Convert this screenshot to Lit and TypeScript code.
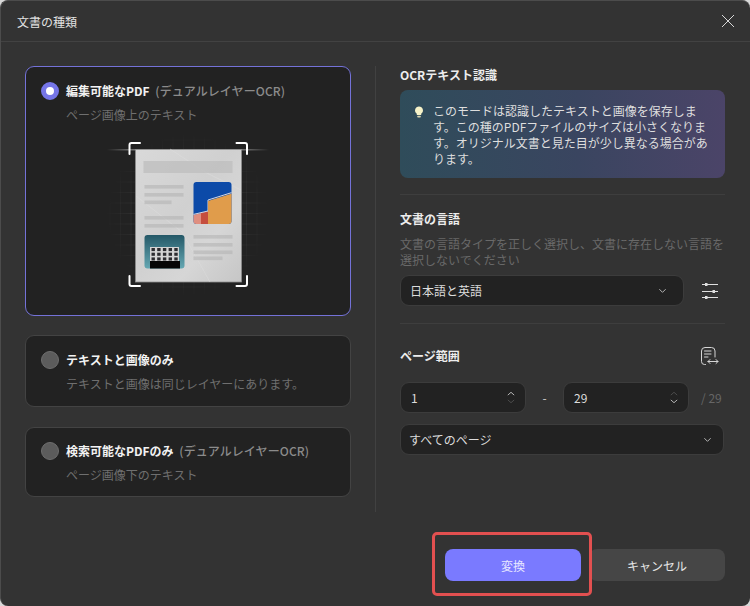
import { LitElement, html, css, svg } from "lit";
import { customElement } from "lit/decorators.js";

const chevron = (cls = "chev") => html`<svg class=${cls} viewBox="0 0 10 6" fill="none" stroke="currentColor" stroke-width="1.1"><path d="M1.5 1 5 4.5 8.5 1"/></svg>`;

const gridLines = () => {
  const out = [];
  for (let x = 110; x <= 265; x += 10.5) out.push(svg`<line x1=${x} x2=${x} y1="135" y2="295"/>`);
  for (let y = 140; y <= 295; y += 10.5) out.push(svg`<line y1=${y} y2=${y} x1="105" x2="270"/>`);
  return out;
};

const textBars = (rows: [number, number, number][]) =>
  rows.map(([x, y, w]) => svg`<rect x=${x} y=${y} width=${w} height="3.6" fill="#b4b4b4" opacity=".6"/>`);

@customElement("page-art")
class PageArt extends LitElement {
  static styles = css`
    :host { display: block; }
    svg { display: block; width: 170px; height: 160px; }
    .soft { filter: blur(.35px); }
  `;
  render() {
    return html`<svg viewBox="100 135 170 160">
      <defs>
        <radialGradient id="gridFade" gradientUnits="userSpaceOnUse" cx="188" cy="215" r="82">
          <stop offset=".5" stop-color="#fff" stop-opacity=".09"/>
          <stop offset="1" stop-color="#fff" stop-opacity="0"/>
        </radialGradient>
        <linearGradient id="scan" x1="0" x2="1" y1="0" y2="0">
          <stop offset="0" stop-color="#fff" stop-opacity="0"/>
          <stop offset=".22" stop-color="#fff" stop-opacity=".5"/>
          <stop offset=".78" stop-color="#fff" stop-opacity=".5"/>
          <stop offset="1" stop-color="#fff" stop-opacity="0"/>
        </linearGradient>
        <linearGradient id="paper" x1="0" y1="0" x2="1" y2="1">
          <stop offset="0" stop-color="#d9d9d9"/>
          <stop offset=".45" stop-color="#d0d0d0"/>
          <stop offset=".7" stop-color="#d6d6d6"/>
          <stop offset="1" stop-color="#c6c6c6"/>
        </linearGradient>
        <linearGradient id="teal" x1="0" y1="0" x2="0" y2="1">
          <stop offset="0" stop-color="#245867"/>
          <stop offset="1" stop-color="#66a9b4"/>
        </linearGradient>
        <clipPath id="c1"><rect x="193.5" y="182" width="38" height="42" rx="3"/></clipPath>
        <clipPath id="c2"><rect x="144.5" y="235" width="40" height="33.500" rx="3"/></clipPath>
      </defs>
      <g stroke="url(#gridFade)" stroke-width=".8">${gridLines()}</g>
      <rect x="107" y="149" width="162" height="1.500" fill="url(#scan)"/>
      <g class="soft">
        <rect x="135.500" y="149.500" width="106" height="132.500" fill="url(#paper)" stroke="#8e8e8e" stroke-width=".8"/>
        <path d="M170 149 205 172 241 190M136 196 182 232 210 282" fill="none" stroke="#dedede" stroke-width="1" opacity=".5"/>
        <rect x="143.500" y="161" width="89" height="12" fill="#bdbdbd" opacity=".75"/>
        ${textBars([[144.500,185,39],[144.500,193,39],[144.500,200.500,27],[144.500,216,39],[144.500,224,39],[193.500,235,39],[193.500,243,39],[193.500,250.500,39],[193.500,256.500,29]])}
        <g clip-path="url(#c1)">
          <rect x="193" y="182" width="39" height="42" fill="#0c4aa8"/>
          <path d="M193 215 208 211.500 208 224 193 224Z" fill="#df8f80"/>
          <path d="M201 213 208 211.500 208 224 201 224Z" fill="#c54e3e"/>
          <path d="M193 214.500 208 211 208 200 232 192.500" fill="none" stroke="#d8d8e0" stroke-width="1"/>
          <path d="M208 201 232 193.500 232 224 208 224Z" fill="#e09c4b"/>
        </g>
        <g clip-path="url(#c2)">
          <rect x="144" y="235" width="41" height="34" fill="url(#teal)"/>
          <rect x="150" y="247" width="29" height="15" fill="#d4d4d4"/>
          <g fill="#2c2c30">
            ${[0,1,2].map((r) => [0,1,2,3,4].map((c) => svg`<rect x=${151.500 + c * 5.700} y=${248 + r * 4.700} width="3.400" height="3.100"/>`))}
          </g>
          <rect x="150" y="261" width="30" height="8" fill="#060606"/>
        </g>
      </g>
      <g fill="none" stroke="#fff" stroke-width="2" stroke-linecap="round" stroke-linejoin="round">
        <path d="M129.500 154V145Q129.500 143 131.500 143H140"/>
        <path d="M236.500 143H245Q247 143 247 145V154"/>
        <path d="M129.500 276V284Q129.500 286 131.500 286H140"/>
        <path d="M236.500 286H245Q247 286 247 284V276"/>
      </g>
    </svg>`;
  }
}

@customElement("app-root")
class AppRoot extends LitElement {
  static styles = css`
    :host {
      display: block; width: 750px; height: 606px; background: #d8d8d8;
      font-family: "Noto Sans CJK JP", "Noto Sans", sans-serif; font-size: 12px; color: #e4e4e4;
    }
    .dialog {
      position: relative; box-sizing: border-box; width: 750px; height: 606px; display: flex; flex-direction: column;
      background: #333; border-radius: 8px; border: 1px solid #4c4c4c; border-width: 1px 0 0 1px; overflow: hidden;
    }
    header {
      flex: none; height: 41px; box-sizing: border-box; display: flex; align-items: center; justify-content: space-between;
      padding: 0 15px 0 16px; border-bottom: 1px solid #424242; color: #e2e2e2;
    }
    .close { width: 14px; height: 14px; display: block; color: #d8d8d8; }
    main { flex: none; display: flex; padding: 24px 0 0 24px; height: 470px; box-sizing: border-box; }
    .left { width: 326px; flex: none; display: flex; flex-direction: column; }
    .vr { width: 1px; flex: none; background: #414141; margin: 0 24px 0 24px; }
    .right { width: 325px; flex: none; }
    .card {
      flex: none; box-sizing: border-box; background: #222; border: 1px solid #434343; border-radius: 9px;
      padding: 15px 15px 0; height: 72px;
    }
    .card.sel { height: 250px; border-color: #7472d8; margin-bottom: 19px; }
    .card.second { margin-bottom: 20px; }
    .card.third { height: 70px; padding-top: 14px; }
    .row { display: flex; align-items: center; gap: 7px; height: 18px; }
    .radio { flex: none; border-radius: 50%; background: #5c5c5c; border: 1px solid #6e6e6e; box-sizing: border-box; width: 18px; height: 18px; }
    .radio.on { background: #fff; border: 5px solid #7575e8; }
    .t { font-weight: 700; color: #f2f2f2; line-height: 18px; white-space: nowrap; }
    .t span { color: #8b8b8b; font-weight: 500; margin-left: 3px; letter-spacing: .1px; }
    .s { margin: 6px 0 0 25px; color: #6f6f6f; line-height: 18px; white-space: nowrap; }
    page-art { margin: 11px 0 0 59px; }
    h3 { margin: 0; font-size: 12px; font-weight: 700; color: #ededed; line-height: 18px; }
    .info {
      margin-top: 6px; box-sizing: border-box; height: 88px; padding: 13px 10px 0 13px; border-radius: 8px; display: flex; gap: 8px;
      background: linear-gradient(90deg, #2f4c5a 0%, #3a4560 55%, #4b4468 100%); line-height: 16px; color: #dedede;
    }
    .bulb { width: 12px; height: 14px; flex: none; margin-top: 2px; }
    .info p { margin: 0; white-space: nowrap; }
    .hr { height: 1px; background: #3e3e3e; }
    .hr.first { margin-top: 16px; }
    .lang { margin-top: 15px; margin-bottom: 17px; }
    .desc { margin: 8px 0 7px; line-height: 16px; color: #696969; white-space: nowrap; }
    .ctl {
      box-sizing: border-box; height: 31px; background: #222; border: 1px solid #3c3c3c; border-radius: 9px;
      display: flex; align-items: center; justify-content: space-between; color: #dcdcdc; line-height: 18px;
    }
    .chev { width: 9px; height: 6px; color: #b4b4b4; display: block; }
    .lrow { display: flex; align-items: center; justify-content: space-between; }
    .lrow .ctl { width: 284px; padding: 0 16px 0 9px; }
    .tune { width: 20px; height: 20px; margin-right: 5px; display: block; }
    .phead { display: flex; align-items: center; justify-content: space-between; margin-top: 22px; height: 20px; padding-right: 5px; }
    .pico { width: 20px; height: 20px; display: block; }
    .nums { display: flex; align-items: center; margin-top: 16px; }
    .num { width: 126px; padding: 0 10px 0 10px; }
    .arrows { display: flex; flex-direction: column; gap: 3px; color: #8a8a8a; }
    .arrows svg { width: 8px; height: 5px; display: block; }
    .dim { color: #565656; }
    .bright { color: #d8d8d8; }
    .dash { width: 37px; text-align: center; color: #cfcfcf; }
    .total { margin-left: 12px; color: #666; }
    .all { margin-top: 11px; padding: 0 11px 0 8px; height: 31px; width: 324px; }
    footer { flex: none; display: flex; justify-content: flex-end; gap: 8px; padding: 37px 25px 0 0; }
    button {
      width: 136px; height: 32px; border: 0; border-radius: 8px; font: inherit; padding: 0; color: #e6e6e6; background: #464646;
    }
    button.primary { background: #7a7aff; color: #e8e8ff; }
    .mark {
      position: absolute; left: 431px; top: 531px; width: 160px; height: 64px; box-sizing: border-box;
      border: 3px solid #e25050; border-radius: 5px;
    }
  `;

  render() {
    return html`<div class="dialog">
      <header>
        <span>文書の種類</span>
        <svg class="close" viewBox="0 0 14 14" fill="none" stroke="currentColor" stroke-width="1"><path d="M1 1 13 13M13 1 1 13"/></svg>
      </header>
      <main>
        <section class="left">
          <div class="card sel">
            <div class="row"><i class="radio on"></i><div class="t">編集可能なPDF <span>(デュアルレイヤーOCR)</span></div></div>
            <div class="s">ページ画像上のテキスト</div>
            <page-art></page-art>
          </div>
          <div class="card second">
            <div class="row"><i class="radio"></i><div class="t">テキストと画像のみ</div></div>
            <div class="s">テキストと画像は同じレイヤーにあります。</div>
          </div>
          <div class="card third">
            <div class="row"><i class="radio"></i><div class="t">検索可能なPDFのみ <span>(デュアルレイヤーOCR)</span></div></div>
            <div class="s">ページ画像下のテキスト</div>
          </div>
        </section>
        <div class="vr"></div>
        <section class="right">
          <h3>OCRテキスト認識</h3>
          <div class="info">
            <svg class="bulb" viewBox="0 0 12 14"><path d="M6 1.500a4 4 0 0 0-2.200 7.300V10h4.400V8.800A4 4 0 0 0 6 1.500Z" fill="#f6f2c8"/><rect x="4.200" y="10.800" width="3.600" height="1.700" rx=".8" fill="#d8d4b0"/></svg>
            <p>このモードは認識したテキストと画像を保存しま<br>す。この種のPDFファイルのサイズは小さくなりま<br>す。オリジナル文書と見た目が少し異なる場合があ<br>ります。</p>
          </div>
          <div class="hr first"></div>
          <div class="lang">
            <h3>文書の言語</h3>
            <div class="desc">文書の言語タイプを正しく選択し、文書に存在しない言語を<br>選択しないでください</div>
            <div class="lrow">
              <div class="ctl"><span>日本語と英語</span>${chevron()}</div>
              <svg class="tune" viewBox="0 0 20 20" stroke="#e0e0e0" stroke-width="1" fill="#e0e0e0">
                <path d="M2 3.500H18M2 10.500H18M2 16.500H18"/><rect x="5" y="2" width="2.500" height="3" stroke="none"/><rect x="12.500" y="9" width="2.500" height="3" stroke="none"/><rect x="5" y="15" width="2.500" height="3" stroke="none"/>
              </svg>
            </div>
          </div>
          <div class="hr"></div>
          <div class="phead">
            <h3>ページ範囲</h3>
            <svg class="pico" viewBox="0 0 20 20" fill="none" stroke="#d6d6d6" stroke-width="1" stroke-linecap="round" stroke-linejoin="round">
              <path d="M5.500 18.500H4.500Q1.500 18.500 1.500 15.500V5Q1.500 1.500 5 1.500H11.500Q15 1.500 15 5V11"/><path d="M4.500 5H11M4.500 8H11M4.500 11H8"/><path d="M8 15.500H18M10 13.500 8 15.500 10 17.500M16 13.500 18 15.500 16 17.500"/>
            </svg>
          </div>
          <div class="nums">
            <div class="ctl num"><span>1</span><div class="arrows"><svg class="bright" viewBox="0 0 10 6" fill="none" stroke="currentColor"><path d="M1 5 5 1.500 9 5"/></svg><svg class="dim" viewBox="0 0 10 6" fill="none" stroke="currentColor"><path d="M1 1 5 4.500 9 1"/></svg></div></div>
            <div class="dash">-</div>
            <div class="ctl num"><span>29</span><div class="arrows"><svg class="dim" viewBox="0 0 10 6" fill="none" stroke="currentColor"><path d="M1 5 5 1.500 9 5"/></svg><svg class="bright" viewBox="0 0 10 6" fill="none" stroke="currentColor"><path d="M1 1 5 4.500 9 1"/></svg></div></div>
            <div class="total">/ 29</div>
          </div>
          <div class="ctl all"><span>すべてのページ</span>${chevron()}</div>
        </section>
      </main>
      <footer>
        <button class="primary">変換</button>
        <button>キャンセル</button>
      </footer>
      <div class="mark"></div>
    </div>`;
  }
}
